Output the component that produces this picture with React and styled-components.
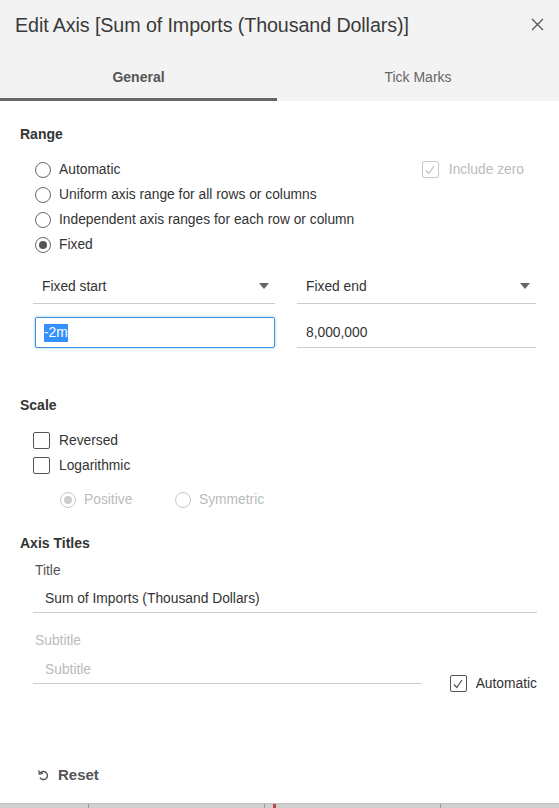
import React from "react";
import styled, { createGlobalStyle } from "styled-components";

const GlobalStyle = createGlobalStyle`
  html, body {
    margin: 0;
    padding: 0;
    background: #ffffff;
  }
  body {
    font-family: "Liberation Sans", Arial, sans-serif;
    color: #333333;
  }
`;

const Dialog = styled.div`
  width: 559px;
  height: 808px;
  display: flex;
  flex-direction: column;
  background: #ffffff;
  overflow: hidden;
`;

const Header = styled.div`
  background: #f3f3f3;
  height: 101px;
  display: flex;
  flex-direction: column;
`;

const TitleBar = styled.div`
  display: flex;
  align-items: center;
  justify-content: space-between;
  height: 50px;
  padding: 0 14px 0 15px;
`;

const DialogTitle = styled.h1`
  margin: 0;
  font-family: "Liberation Sans", Arial, sans-serif;
  font-weight: 400;
  font-size: 19.7px;
  color: #3a3a3a;
  letter-spacing: -0.1px;
`;

const CloseButton = styled.button`
  border: none;
  background: none;
  padding: 0;
  width: 14px;
  height: 14px;
  display: flex;
  cursor: pointer;
`;

const Tabs = styled.div`
  display: flex;
  margin-top: auto;
`;

const Tab = styled.div`
  flex: 0 0 ${(p) => (p.$wide ? "277px" : "282px")};
  height: 51px;
  box-sizing: border-box;
  display: flex;
  align-items: center;
  justify-content: center;
  padding-top: 6px;
  font-size: 14px;
  font-weight: ${(p) => (p.$active ? 700 : 400)};
  color: ${(p) => (p.$active ? "#555555" : "#666666")};
  border-bottom: 3px solid ${(p) => (p.$active ? "#666666" : "transparent")};
`;

const Body = styled.div`
  flex: 1;
  display: flex;
  flex-direction: column;
  padding: 24px 22px 0 20px;
`;

const SectionTitle = styled.div`
  font-weight: 700;
  font-size: 14px;
  color: #333333;
  line-height: 18px;
`;

const OptionList = styled.div`
  display: flex;
  flex-direction: column;
  padding-left: ${(p) => p.$left ?? 15}px;
  margin-top: ${(p) => p.$top || 0}px;
`;

const OptionRow = styled.label`
  display: flex;
  align-items: center;
  height: ${(p) => p.$h || 25}px;
  width: ${(p) => (p.$w ? `${p.$w}px` : "auto")};
  font-size: 13.8px;
  color: ${(p) => (p.$disabled ? "#bbbbbb" : "#333333")};
`;

const RowSplit = styled.div`
  display: flex;
  justify-content: space-between;
  align-items: center;
  padding-right: 13px;
`;

const SubOptions = styled.div`
  display: flex;
  padding-left: 27px;
  margin-top: 9px;
`;

const Radio = styled.span`
  width: 16px;
  height: 16px;
  box-sizing: border-box;
  border-radius: 50%;
  border: 1px solid ${(p) => (p.$disabled ? "#c8c8c8" : "#666666")};
  display: flex;
  align-items: center;
  justify-content: center;
  margin-right: 8px;
  flex-shrink: 0;

  &::after {
    content: "";
    width: 8px;
    height: 8px;
    border-radius: 50%;
    background: ${(p) => (p.$disabled ? "#cccccc" : "#555555")};
    display: ${(p) => (p.$checked ? "block" : "none")};
  }
`;

const Box = styled.span`
  width: 17px;
  height: 17px;
  box-sizing: border-box;
  border: 1px solid ${(p) => (p.$disabled ? "#c8c8c8" : "#555555")};
  border-radius: 2px;
  display: flex;
  align-items: center;
  justify-content: center;
  margin-right: ${(p) => (p.$wideGap ? 10 : 9)}px;
  flex-shrink: 0;
  background: #ffffff;
`;

const Check = ({ color }) => (
  <svg width="12" height="12" viewBox="0 0 12 12">
    <path d="M2 6.5 L4.8 9.5 L10 2" fill="none" stroke={color} strokeWidth="1.3" />
  </svg>
);

const Checkbox = ({ checked, disabled, wideGap }) => (
  <Box $disabled={disabled} $wideGap={wideGap}>
    {checked && <Check color={disabled ? "#c4c4c4" : "#555555"} />}
  </Box>
);

const FieldGrid = styled.div`
  display: grid;
  grid-template-columns: 242px 239px;
  column-gap: 22px;
  padding-left: 13px;
  margin-top: 14px;
  row-gap: 13px;
`;

const Select = styled.div`
  height: 33px;
  box-sizing: border-box;
  border-bottom: 1px solid #cccccc;
  display: flex;
  align-items: center;
  justify-content: space-between;
  padding: 0 6px 2px 9px;
  font-size: 13.8px;
  color: #333333;
`;

const Caret = styled.span`
  width: 0;
  height: 0;
  border-left: 5px solid transparent;
  border-right: 5px solid transparent;
  border-top: 6px solid #666666;
`;

const TextField = styled.div`
  height: 31px;
  box-sizing: border-box;
  display: flex;
  align-items: center;
  font-size: 13.8px;
  color: #333333;
  padding-left: ${(p) => (p.$focused ? 8 : 9)}px;
  border: ${(p) => (p.$focused ? "1px solid #3d8fe0" : "none")};
  border-bottom: 1px solid ${(p) => (p.$focused ? "#3d8fe0" : "#cccccc")};
  border-radius: ${(p) => (p.$focused ? "2px" : "0")};
  box-shadow: ${(p) => (p.$focused ? "0 0 3px rgba(61, 143, 224, 0.55)" : "none")};
  margin-left: ${(p) => (p.$focused ? 2 : 0)}px;
`;

const Selected = styled.span`
  background: #3390ff;
  color: #ffffff;
  line-height: 18px;
`;

const Spacer = styled.div`
  height: ${(p) => p.$h}px;
  flex-shrink: 0;
`;

const FieldLabel = styled.div`
  font-size: 13.8px;
  padding-left: 15px;
  color: ${(p) => (p.$disabled ? "#bbbbbb" : "#555555")};
  margin-top: ${(p) => p.$top || 0}px;
`;

const Underlined = styled.div`
  width: ${(p) => p.$w}px;
  margin-left: 13px;
  margin-top: ${(p) => p.$top || 0}px;
  height: 28px;
  box-sizing: border-box;
  display: flex;
  align-items: center;
  padding-left: 12px;
  font-size: 13.8px;
  color: ${(p) => (p.$placeholder ? "#bbbbbb" : "#333333")};
  border-bottom: 1px solid #cccccc;
`;

const SubtitleRow = styled.div`
  display: flex;
  align-items: flex-end;
  justify-content: space-between;
`;

const AutoCheck = styled.label`
  display: flex;
  align-items: center;
  font-size: 13.8px;
  color: #333333;
  margin-bottom: -8px;
`;

const ResetButton = styled.button`
  border: none;
  background: none;
  display: flex;
  align-items: center;
  gap: 9px;
  padding: 0;
  margin-left: 18px;
  font-family: "Liberation Sans", Arial, sans-serif;
  font-weight: 700;
  font-size: 15px;
  color: #555555;
  cursor: pointer;
  align-self: flex-start;
`;

const Backdrop = styled.div`
  height: 4px;
  margin-top: auto;
  background: #cfcfcf;
  border-top: 1px solid #c2c2c2;
  position: relative;
`;

const Tick = styled.span`
  position: absolute;
  left: ${(p) => p.$x}px;
  top: 0;
  width: ${(p) => (p.$red ? 3 : 1)}px;
  height: 4px;
  background: ${(p) => (p.$red ? "#c0464b" : "#9a9a9a")};
`;

export default function App() {
  return (
    <Dialog>
      <GlobalStyle />
      <Header>
        <TitleBar>
          <DialogTitle>Edit Axis [Sum of Imports (Thousand Dollars)]</DialogTitle>
          <CloseButton aria-label="Close">
            <svg width="13" height="13" viewBox="0 0 13 13">
              <path d="M1 1 L12 12 M12 1 L1 12" stroke="#555555" strokeWidth="1.3" />
            </svg>
          </CloseButton>
        </TitleBar>
        <Tabs>
          <Tab $active $wide>General</Tab>
          <Tab>Tick Marks</Tab>
        </Tabs>
      </Header>

      <Body>
        <SectionTitle>Range</SectionTitle>
        <OptionList $top={14}>
          <RowSplit>
            <OptionRow><Radio />Automatic</OptionRow>
            <OptionRow $disabled>
              <Checkbox checked disabled wideGap />
              Include zero
            </OptionRow>
          </RowSplit>
          <OptionRow><Radio />Uniform axis range for all rows or columns</OptionRow>
          <OptionRow><Radio />Independent axis ranges for each row or column</OptionRow>
          <OptionRow><Radio $checked />Fixed</OptionRow>
        </OptionList>

        <FieldGrid>
          <Select>Fixed start<Caret /></Select>
          <Select>Fixed end<Caret /></Select>
          <TextField $focused><Selected>-2m</Selected></TextField>
          <TextField>8,000,000</TextField>
        </FieldGrid>

        <Spacer $h={48} />
        <SectionTitle>Scale</SectionTitle>
        <OptionList $top={14} $left={13}>
          <OptionRow><Checkbox />Reversed</OptionRow>
          <OptionRow><Checkbox />Logarithmic</OptionRow>
          <SubOptions>
            <OptionRow $disabled $w={115}><Radio $checked $disabled />Positive</OptionRow>
            <OptionRow $disabled><Radio $disabled />Symmetric</OptionRow>
          </SubOptions>
        </OptionList>

        <Spacer $h={22} />
        <SectionTitle>Axis Titles</SectionTitle>
        <FieldLabel $top={11}>Title</FieldLabel>
        <Underlined $w={504} $top={7}>Sum of Imports (Thousand Dollars)</Underlined>
        <FieldLabel $disabled $top={20}>Subtitle</FieldLabel>
        <SubtitleRow>
          <Underlined $w={389} $top={8} $placeholder>Subtitle</Underlined>
          <AutoCheck>
            <Checkbox checked />
            Automatic
          </AutoCheck>
        </SubtitleRow>

        <Spacer $h={82} />
        <ResetButton>
          <svg width="11" height="12" viewBox="0 0 11 12">
            <path d="M2.2 4.2 A4 4 0 1 1 2 8.6" fill="none" stroke="#555555" strokeWidth="1.4" />
            <path d="M0.8 1.4 L1.4 5.2 L5 4.2" fill="none" stroke="#555555" strokeWidth="1.4" />
          </svg>
          Reset
        </ResetButton>
      </Body>

      <Backdrop>
        <Tick $x={88} />
        <Tick $x={264} />
        <Tick $x={273} $red />
        <Tick $x={440} />
      </Backdrop>
    </Dialog>
  );
}
